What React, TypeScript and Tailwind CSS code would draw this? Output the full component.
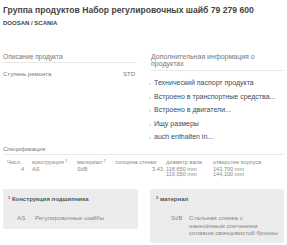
const items = [
  "Технический паспорт продукта",
  "Встроено в транспортные средства...",
  "Встроено в двигатели...",
  "Ищу размеры",
  "auch enthalten in...",
];

const App = () => {
  return (
    <div className="w-[287px] h-[245px] overflow-hidden bg-white px-[3px] pt-[5px] text-[#555] font-['Liberation_Sans',Arial,sans-serif]">
      <p className="text-[8.6px] leading-[11px] font-bold text-[#444] whitespace-nowrap">Группа продуктов Набор регулировочных шайб 79 279 600</p>
      <p className="mt-[3px] text-[6px] leading-[8px] font-bold text-[#444]">DOOSAN / SCANIA</p>

      <div className="mt-[26px] h-[88px] flex gap-[14px]">
        <div className="w-[134px]">
          <p className="text-[6.6px] leading-[8px] text-[#777] pb-[1px] border-b border-[#e8e8e8]">Описание продукта</p>
          <div className="mt-[7px] flex justify-between text-[6px] leading-[8px] text-[#777]">
            <span>Ступень ремонта</span>
            <span className="pr-[2px]">STD</span>
          </div>
        </div>
        <div className="flex-1">
          <p className="text-[7px] leading-[7px] text-[#777] pb-[3px] border-b border-[#e8e8e8]">Дополнительная информация о<br />продуктах</p>
          <div className="mt-[8px] -ml-[2px] flex flex-col gap-[5.5px]">
            {items.map((t) => (
              <div key={t} className="flex items-center gap-[3px] text-[7px] leading-[8px] text-[#3c4a5a]">
                <span className="text-[#aaa] text-[6px]">›</span>
                <span>{t}</span>
              </div>
            ))}
          </div>
        </div>
      </div>

      <p className="mt-[4px] text-[6px] leading-[8px] text-[#777] pb-[1px] border-b border-[#e8e8e8]">Спецификация</p>
      <div className="mt-[4px] grid grid-cols-[29px_45px_38px_51px_47px_1fr] text-[5.6px] text-[#888]">
        <span className="leading-[6px] pl-[4px]">Числ.</span>
        <span className="leading-[6px]">конструкция <sup className="text-[4px]">1</sup></span>
        <span className="leading-[6px]">материал <sup className="text-[4px]">2</sup></span>
        <span className="leading-[6px]">толщина стенки</span>
        <span className="leading-[6px]">диаметр вала</span>
        <span className="leading-[6px]">отверстие корпуса</span>

        <span className="mt-[2px] leading-[5px] text-right pr-[8px]">4</span>
        <span className="mt-[2px] leading-[5px]">AS</span>
        <span className="mt-[2px] leading-[5px]">St/B</span>
        <span className="mt-[2px] leading-[5px] text-right pr-[3px]">3.43</span>
        <span className="mt-[2px] leading-[5px]">118,650 mm<br />119,050 mm</span>
        <span className="mt-[2px] leading-[5px]">143,700 mm<br />144,100 mm</span>
      </div>

      <div className="mt-[12px] flex gap-[12px] items-start">
        <div className="w-[135px] bg-[#ececec] rounded-[2px] pl-[5px] pt-[6px] pb-[7px]">
          <p className="text-[6px] leading-[8px] font-bold text-[#555]"><sup className="text-[4px]">1</sup> Конструкция подшипника</p>
          <div className="mt-[11px] flex text-[6.2px] leading-[8px] text-[#888]">
            <span className="pl-[9px] w-[27px]">AS</span>
            <span>Регулировочные шайбы</span>
          </div>
        </div>
        <div className="flex-1 bg-[#ececec] rounded-[2px] pl-[6px] pt-[6px] pb-[6px]">
          <p className="text-[6px] leading-[8px] font-bold text-[#555]"><sup className="text-[4px]">2</sup> материал</p>
          <div className="mt-[11px] flex text-[6.2px] leading-[7.5px] text-[#888]">
            <span className="pl-[15px] w-[33px]">St/B</span>
            <span>Стальная спинка с<br />нанесённым спечением<br />сплавом свинцовистой бронзы</span>
          </div>
        </div>
      </div>
    </div>
  );
};

export default App;
